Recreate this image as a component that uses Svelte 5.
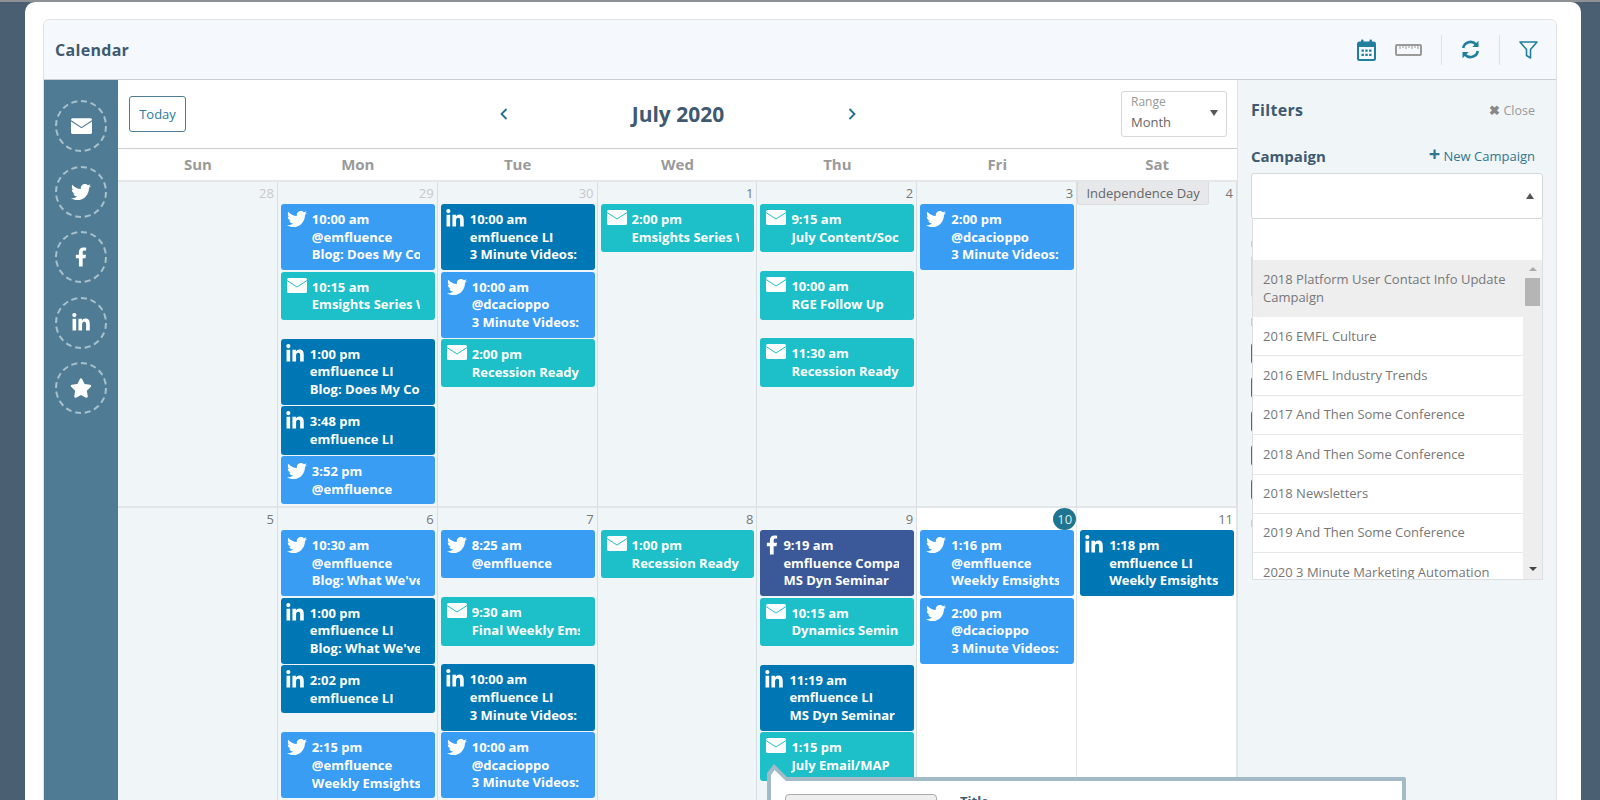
<script>
  const icons = {
    tw: { box: '0 0 512 512', w: 20, h: 20, d: 'M459.37 151.716c.325 4.548.325 9.097.325 13.645 0 138.72-105.583 298.558-298.558 298.558-59.452 0-114.68-17.219-161.137-47.106 8.447.974 16.568 1.299 25.34 1.299 49.055 0 94.213-16.568 130.274-44.832-46.132-.975-84.792-31.188-98.112-72.772 6.498.974 12.995 1.624 19.818 1.624 9.421 0 18.843-1.3 27.614-3.573-48.081-9.747-84.143-51.98-84.143-102.985v-1.299c13.969 7.797 30.214 12.67 47.431 13.319-28.264-18.843-46.781-51.005-46.781-87.391 0-19.492 5.197-37.36 14.294-52.954 51.655 63.675 129.3 105.258 216.365 109.807-1.624-7.797-2.599-15.918-2.599-24.04 0-57.828 46.782-104.934 104.934-104.934 30.213 0 57.502 12.67 76.67 33.137 23.715-4.548 46.456-13.32 66.599-25.34-7.798 24.366-24.366 44.833-46.132 57.827 21.117-2.273 41.584-8.122 60.426-16.243-14.292 20.791-32.161 39.308-52.628 54.253z' },
    li: { box: '0 0 448 512', w: 18, h: 20, d: 'M100.28 448H7.4V148.9h92.88zM53.79 108.1C24.09 108.1 0 83.5 0 53.8a53.79 53.79 0 0 1 107.58 0c0 29.7-24.1 54.3-53.79 54.3zM447.9 448h-92.68V302.4c0-34.7-.7-79.2-48.29-79.2-48.29 0-55.69 37.7-55.69 76.7V448h-92.78V148.9h89.08v40.8h1.3c12.4-23.5 42.69-48.3 87.88-48.3 94 0 111.28 61.9 111.28 142.3V448z' },
    fb: { box: '0 0 320 512', w: 12, h: 20, d: 'M279.14 288l14.22-92.66h-88.91v-60.13c0-25.35 12.42-50.06 52.24-50.06h40.42V6.26S260.43 0 225.36 0c-73.22 0-121.08 44.38-121.08 124.72v70.62H22.89V288h81.39v224h100.17V288z' },
    star: { box: '0 0 576 512', w: 22, h: 20, d: 'M259.3 17.8L194 150.2 47.9 171.5c-26.2 3.8-36.7 36.1-17.7 54.6l105.7 103-25 145.5c-4.5 26.3 23.2 46 46.4 33.7L288 439.6l130.7 68.7c23.2 12.2 50.9-7.4 46.4-33.7l-25-145.5 105.7-103c19-18.5 8.5-50.8-17.7-54.6L382 150.2 316.7 17.8c-11.7-23.6-45.6-23.9-57.4 0z' }
  };

  const days = ['Sun', 'Mon', 'Tue', 'Wed', 'Thu', 'Fri', 'Sat'];

  const ev = (type, time, who, what, gap) => ({ type, time, who, what, gap });

  const weeks = [
    [
      { n: 28, dim: true, events: [] },
      { n: 29, dim: true, events: [
        ev('tw', '10:00 am', '@emfluence', 'Blog: Does My Content Work'),
        ev('em', '10:15 am', 'Emsights Series Wrap', null, true),
        ev('li', '1:00 pm', 'emfluence LI', 'Blog: Does My Content Work'),
        ev('li', '3:48 pm', 'emfluence LI'),
        ev('tw', '3:52 pm', '@emfluence')
      ] },
      { n: 30, dim: true, events: [
        ev('li', '10:00 am', 'emfluence LI', '3 Minute Videos:'),
        ev('tw', '10:00 am', '@dcacioppo', '3 Minute Videos:'),
        ev('em', '2:00 pm', 'Recession Ready')
      ] },
      { n: 1, events: [ev('em', '2:00 pm', 'Emsights Series Wrap')] },
      { n: 2, events: [
        ev('em', '9:15 am', 'July Content/Social', null, true),
        ev('em', '10:00 am', 'RGE Follow Up', null, true),
        ev('em', '11:30 am', 'Recession Ready')
      ] },
      { n: 3, events: [ev('tw', '2:00 pm', '@dcacioppo', '3 Minute Videos:')] },
      { n: 4, holiday: 'Independence Day', events: [] }
    ],
    [
      { n: 5, events: [] },
      { n: 6, events: [
        ev('tw', '10:30 am', '@emfluence', "Blog: What We've Learned"),
        ev('li', '1:00 pm', 'emfluence LI', "Blog: What We've Learned"),
        ev('li', '2:02 pm', 'emfluence LI', null, true),
        ev('tw', '2:15 pm', '@emfluence', 'Weekly Emsights')
      ] },
      { n: 7, events: [
        ev('tw', '8:25 am', '@emfluence', null, true),
        ev('em', '9:30 am', 'Final Weekly Emsights', null, true),
        ev('li', '10:00 am', 'emfluence LI', '3 Minute Videos:'),
        ev('tw', '10:00 am', '@dcacioppo', '3 Minute Videos:')
      ] },
      { n: 8, events: [ev('em', '1:00 pm', 'Recession Ready')] },
      { n: 9, events: [
        ev('fb', '9:19 am', 'emfluence Company', 'MS Dyn Seminar'),
        ev('em', '10:15 am', 'Dynamics Seminar', null, true),
        ev('li', '11:19 am', 'emfluence LI', 'MS Dyn Seminar'),
        ev('em', '1:15 pm', 'July Email/MAP')
      ] },
      { n: 10, today: true, white: true, events: [
        ev('tw', '1:16 pm', '@emfluence', 'Weekly Emsights'),
        ev('tw', '2:00 pm', '@dcacioppo', '3 Minute Videos:')
      ] },
      { n: 11, white: true, events: [ev('li', '1:18 pm', 'emfluence LI', 'Weekly Emsights')] }
    ]
  ];

  const campaigns = [
    '2016 EMFL Culture',
    '2016 EMFL Industry Trends',
    '2017 And Then Some Conference',
    '2018 And Then Some Conference',
    '2018 Newsletters',
    '2019 And Then Some Conference',
    '2020 3 Minute Marketing Automation'
  ];
</script>

{#snippet glyph(type, cls)}
  {#if type === 'em'}
    <svg class={cls} width="20" height="15" viewBox="0 0 20 15">
      <rect width="20" height="15" rx="1.5" fill="#fff" />
      <path class="flap" d="M0 2.5 L10 9 L20 2.5" fill="none" stroke-width="1" />
    </svg>
  {:else}
    <svg class={cls} width={icons[type].w} height={icons[type].h} viewBox={icons[type].box}>
      <path d={icons[type].d} fill="#fff" />
    </svg>
  {/if}
{/snippet}

<div class="page">
  <div class="panel">
    <div class="card">
      <header class="head">
        <h1>Calendar</h1>
        <div class="tools">
          <svg width="19" height="22" viewBox="0 0 19 22">
            <rect x="1" y="3.5" width="17" height="17.5" rx="1.5" fill="none" stroke="#1f7f9c" stroke-width="2" />
            <rect x="1" y="3.5" width="17" height="4.5" fill="#1f7f9c" />
            <rect x="4" y="0.5" width="2.5" height="5" rx="1" fill="#1f7f9c" />
            <rect x="12.5" y="0.5" width="2.5" height="5" rx="1" fill="#1f7f9c" />
            <path d="M4.5 10.5h2.4v2.2H4.5zM8.3 10.5h2.4v2.2H8.3zM12.1 10.5h2.4v2.2h-2.4zM4.5 14.8h2.4V17H4.5zM8.3 14.8h2.4V17H8.3zM12.1 14.8h2.4V17h-2.4z" fill="#1f7f9c" />
          </svg>
          <svg class="ruler" width="27" height="12" viewBox="0 0 27 12">
            <rect x="1" y="1" width="25" height="10" rx="1" fill="none" stroke="#9a9a9a" stroke-width="2" />
            <path d="M5 2v3M8 2v2M11 2v3M14 2v2M17 2v3M20 2v2M23 2v3" stroke="#9a9a9a" stroke-width="1" />
          </svg>
          <span class="sep"></span>
          <svg width="19" height="19" viewBox="0 0 19 19">
            <path d="M2.2 8 A7.4 7.4 0 0 1 15 4.4" fill="none" stroke="#1f7f9c" stroke-width="2.6" />
            <path d="M17.5 0.8 V7 H11.3 Z" fill="#1f7f9c" />
            <path d="M16.8 11 A7.4 7.4 0 0 1 4 14.6" fill="none" stroke="#1f7f9c" stroke-width="2.6" />
            <path d="M1.5 18.2 V12 H7.7 Z" fill="#1f7f9c" />
          </svg>
          <span class="sep"></span>
          <svg width="19" height="18" viewBox="0 0 19 18">
            <path d="M1 1 H18 L11.5 8.5 V17 L7.5 14.5 V8.5 Z" fill="none" stroke="#1f7f9c" stroke-width="1.6" stroke-linejoin="round" />
          </svg>
        </div>
      </header>

      <div class="body">
        <aside class="rail">
          <span class="disc">
            <svg width="21" height="16" viewBox="0 0 20 15">
              <rect width="20" height="15" rx="1.5" fill="#fff" />
              <path d="M0 2.5 L10 9 L20 2.5" fill="none" stroke="#4f7c94" stroke-width="1" />
            </svg>
          </span>
          <span class="disc">{@render glyph('tw', 'rail-tw')}</span>
          <span class="disc">{@render glyph('fb', '')}</span>
          <span class="disc">{@render glyph('li', '')}</span>
          <span class="disc">{@render glyph('star', '')}</span>
        </aside>

        <main class="cal">
          <div class="bar">
            <button class="today">Today</button>
            <div class="month">
              <svg width="8" height="12" viewBox="0 0 8 12"><path d="M6.5 1 L1.5 6 L6.5 11" fill="none" stroke="#1f6f8f" stroke-width="1.8" /></svg>
              <h2>July 2020</h2>
              <svg width="8" height="12" viewBox="0 0 8 12"><path d="M1.5 1 L6.5 6 L1.5 11" fill="none" stroke="#1f6f8f" stroke-width="1.8" /></svg>
            </div>
            <div class="range">
              <div>
                <small>Range</small>
                <span>Month</span>
              </div>
              <i class="down"></i>
            </div>
          </div>

          <div class="dow">
            {#each days as d}
              <div>{d}</div>
            {/each}
          </div>

          <div class="grid">
            {#each weeks as week}
              {#each week as cell}
                <div class="cell" class:white={cell.white}>
                  <div class="date" class:dim={cell.dim}>
                    {#if cell.holiday}
                      <span class="holiday">{cell.holiday}</span>
                    {/if}
                    {#if cell.today}
                      <span class="today-n">{cell.n}</span>
                    {:else}
                      <span>{cell.n}</span>
                    {/if}
                  </div>
                  {#each cell.events as e}
                    <div class="event {e.type}" class:gap={e.gap}>
                      <span class="ico">{@render glyph(e.type, '')}</span>
                      <div class="txt">
                        <div>{e.time}</div>
                        <div>{e.who}</div>
                        {#if e.what}<div>{e.what}</div>{/if}
                      </div>
                    </div>
                  {/each}
                </div>
              {/each}
            {/each}
          </div>
        </main>

        <aside class="filters">
          <div class="f-top">
            <h3>Filters</h3>
            <span class="close"><b>✖</b> Close</span>
          </div>
          <div class="f-label">
            <h4>Campaign</h4>
            <span class="new"><b>+</b> New Campaign</span>
          </div>
          <div class="select"><i class="up"></i></div>

          <div class="under">
            <span class="tick t1"></span>
            <span class="ghost"></span>
            <span class="tick t2"></span>
            <span class="tog"></span>
            <span class="tog"></span>
            <span class="tog"></span>
            <span class="tog"></span>
            <span class="tog"></span>
            <span class="tick t3"></span>
          </div>

          <div class="drop">
            <div class="search"></div>
            <div class="drop-body">
              <ul>
                <li class="hl">2018 Platform User Contact Info Update Campaign</li>
                {#each campaigns as c}
                  <li>{c}</li>
                {/each}
              </ul>
              <div class="scroll">
                <i class="sb-up"></i>
                <span class="thumb"></span>
                <i class="sb-down"></i>
              </div>
            </div>
          </div>
        </aside>

        <div class="pop">
          <svg class="notch" width="24" height="20" viewBox="0 0 24 20">
            <path d="M0 20 V9 L7 0 L20 13 H24 V20 Z" fill="#a3bac7" />
            <path d="M4 20 V11 L7.5 6 L19 17 H24 V20 Z" fill="#fff" />
          </svg>
          <div class="pop-inner">
            <div class="pick"></div>
            <div class="pop-title">Title</div>
          </div>
        </div>
      </div>
    </div>
  </div>
</div>

<style>
  :global(body) {
    margin: 0;
    overflow: hidden;
  }

  .page {
    height: 800px;
    overflow: hidden;
    box-sizing: border-box;
    background: #4a6072;
    border-top: 2px solid #8d9094;
    padding: 0 19px 0 25px;
    font-family: "Open Sans", sans-serif;
    color: #555;
  }

  .panel {
    height: 900px;
    background: #fff;
    border-radius: 10px 10px 0 0;
    padding: 17px 24px 0 18px;
  }

  .card {
    border: 1px solid #dfe3e6;
    border-radius: 6px 6px 0 0;
    height: 880px;
  }

  .head {
    height: 59px;
    background: #f5f9fd;
    border-bottom: 1px solid #c9cfd3;
    border-radius: 6px 6px 0 0;
    display: flex;
    align-items: center;
    justify-content: space-between;
    padding: 0 18px 0 11px;
  }

  h1 {
    margin: 0;
    font-size: 16px;
    font-weight: 700;
    color: #3f5a70;
    letter-spacing: 0.3px;
  }

  .tools {
    display: flex;
    align-items: center;
    gap: 19px;
  }

  .sep {
    width: 1px;
    height: 30px;
    background: #dfe3e6;
  }

  .body {
    position: relative;
    display: flex;
    height: 820px;
  }

  .rail {
    width: 74px;
    flex: none;
    background: #4f7c94;
    display: flex;
    flex-direction: column;
    align-items: center;
    gap: 13.5px;
    padding-top: 20px;
    box-sizing: border-box;
  }

  .disc {
    width: 48px;
    height: 48px;
    border: 2px dashed #a9c1cd;
    border-radius: 50%;
    display: flex;
    align-items: center;
    justify-content: center;
    flex: none;
  }

  .cal {
    flex: 1;
    min-width: 0;
    background: #fff;
  }

  .bar {
    height: 68px;
    display: grid;
    grid-template-columns: 1fr auto 1fr;
    align-items: center;
    padding: 0 10px 0 11px;
    border-bottom: 1px solid #cfcfcf;
  }

  .today {
    justify-self: start;
    width: 57px;
    height: 36px;
    padding: 0;
    background: #fff;
    border: 1px solid #4f7c94;
    border-radius: 3px;
    font: 13px "Open Sans", sans-serif;
    color: #2b7a9e;
  }

  .month {
    width: 356px;
    display: flex;
    align-items: center;
    justify-content: space-between;
  }

  h2 {
    margin: 0;
    font-size: 21px;
    font-weight: 700;
    color: #3f5a70;
  }

  .range {
    justify-self: end;
    width: 106px;
    height: 46px;
    box-sizing: border-box;
    border: 1px solid #d5d8da;
    border-radius: 3px;
    padding: 0 9px 2px;
    display: flex;
    align-items: center;
    justify-content: space-between;
  }

  .range small {
    display: block;
    font-size: 12px;
    line-height: 17px;
    color: #999;
  }

  .range span {
    display: block;
    font-size: 13px;
    line-height: 24px;
    color: #666;
  }

  .down {
    width: 0;
    height: 0;
    margin-right: -1px;
    border: 4.5px solid transparent;
    border-top: 6px solid #555;
    border-bottom: 0;
  }

  .dow {
    height: 31px;
    display: grid;
    grid-template-columns: repeat(7, 1fr);
    border-bottom: 2px solid #e4e6e8;
    font-size: 15px;
    font-weight: 700;
    line-height: 30px;
    color: #9a9a9a;
    text-align: center;
  }

  .grid {
    display: grid;
    grid-template-columns: repeat(7, 1fr);
    grid-auto-rows: 326px;
  }

  .cell {
    min-width: 0;
    box-sizing: border-box;
    background: #f0f5f8;
    border-right: 1px solid #d9dee2;
    border-bottom: 2px solid #e3e6e8;
    padding: 0 2px 0 3px;
  }

  .cell.white {
    background: #fff;
    border-right-color: #e3e6e8;
  }

  .date {
    height: 22px;
    display: flex;
    align-items: center;
    justify-content: flex-end;
    gap: 0;
    padding-right: 1px;
    font-size: 13px;
    color: #777;
  }

  .date.dim {
    color: #c8c8c8;
  }

  .holiday {
    margin: 0 auto 0 -3px;
    width: 132px;
    height: 23px;
    line-height: 22px;
    box-sizing: border-box;
    background: #e6e8e9;
    border: 1px solid #dadcdd;
    border-top: 0;
    border-radius: 0 0 3px 3px;
    font-size: 13px;
    text-align: center;
    color: #666;
  }

  .today-n {
    width: 23px;
    height: 22px;
    margin: 0 -3px 0 0;
    background: #1f7590;
    border-radius: 50%;
    color: #d8eef5;
    text-align: center;
    line-height: 22px;
  }

  .event {
    display: flex;
    box-sizing: border-box;
    padding: 7px 15px 6px 6px;
    margin-bottom: 1.4px;
    border-radius: 3px;
    color: #fff;
    font-size: 13px;
    font-weight: 700;
    line-height: 17.7px;
    white-space: nowrap;
  }

  .event.gap {
    margin-bottom: 18.8px;
  }

  .event.tw {
    background: #3a9df4;
  }

  .event.em {
    background: #1dbfc9;
  }

  .event.li {
    background: #0077b5;
    padding-left: 5px;
  }

  .event.fb {
    background: #3b5998;
  }

  .ico {
    flex: none;
    margin-top: -2px;
  }

  .event.tw .ico {
    width: 25px;
  }

  .event.em .ico {
    width: 25px;
    margin-top: -1px;
  }

  .event.li .ico {
    width: 24px;
  }

  .event.fb .ico {
    width: 17px;
  }

  .flap {
    stroke: #1dbfc9;
  }

  .txt {
    min-width: 0;
    overflow: hidden;
  }

  .filters {
    width: 319px;
    flex: none;
    box-sizing: border-box;
    position: relative;
    background: #f0f5f8;
    border-left: 1px solid #dfe3e6;
    padding: 0 13px;
  }

  .f-top {
    height: 60px;
    display: flex;
    align-items: center;
    justify-content: space-between;
    padding-right: 8px;
  }

  h3 {
    margin: 0;
    font-size: 16px;
    font-weight: 700;
    color: #3f5a70;
    letter-spacing: 0.3px;
  }

  .close {
    font-size: 12.5px;
    color: #999;
  }

  .close b {
    font-size: 13px;
    color: #888;
  }

  .f-label {
    height: 33px;
    margin-top: -1px;
    margin-bottom: 1px;
    display: flex;
    align-items: center;
    justify-content: space-between;
    padding-right: 8px;
  }

  h4 {
    margin: 0;
    font-size: 15px;
    font-weight: 700;
    color: #3f5a70;
  }

  .new {
    font-size: 13px;
    color: #2f7690;
  }

  .new b {
    font-size: 20px;
    line-height: 12px;
    font-weight: 700;
  }

  .select {
    height: 46px;
    box-sizing: border-box;
    background: #fff;
    border: 1px solid #d5d8da;
    border-radius: 3px;
    display: flex;
    align-items: center;
    justify-content: flex-end;
    padding-right: 8px;
  }

  .up {
    width: 0;
    height: 0;
    border: 4.5px solid transparent;
    border-bottom: 6px solid #555;
    border-top: 0;
  }

  .under {
    display: flex;
    flex-direction: column;
    align-items: flex-start;
  }

  .tick {
    width: 3px;
    background: #e0c8b8;
  }

  .t1 {
    height: 6px;
    margin-top: 22px;
  }

  .ghost {
    width: 8px;
    height: 43px;
    margin-top: 8px;
    box-sizing: border-box;
    border: 1px solid #d5d8da;
    border-radius: 3px;
    background: #fff;
  }

  .t2 {
    height: 8px;
    margin-top: 20px;
  }

  .tog {
    width: 6px;
    height: 21px;
    margin-bottom: 13px;
    border-radius: 3px;
    background: #1f7f9c;
  }

  .t2 + .tog {
    margin-top: 17px;
  }

  .t3 {
    height: 7px;
    margin-top: 7px;
  }

  .drop {
    position: absolute;
    left: 14px;
    top: 139px;
    width: 291px;
    box-sizing: border-box;
    background: #fff;
    border: 1px solid #dcdfe1;
    border-top: 0;
  }

  .search {
    height: 41px;
  }

  .drop-body {
    display: flex;
    height: 319px;
    overflow: hidden;
  }

  .drop ul {
    flex: 1;
    min-width: 0;
    margin: 0;
    padding: 0;
    list-style: none;
    font-size: 13px;
    line-height: 17.5px;
    color: #777;
  }

  .drop li {
    box-sizing: border-box;
    height: 39.4px;
    padding: 10.5px 10px 0;
    border-bottom: 1px solid #e4e6e8;
    white-space: nowrap;
  }

  .drop li.hl {
    height: 57px;
    padding-top: 11px;
    padding-right: 6px;
    background: #eeeeee;
    border-bottom: 0;
    white-space: normal;
  }

  .scroll {
    width: 19px;
    flex: none;
    background: #eeeeee;
    display: flex;
    flex-direction: column;
    align-items: center;
    position: relative;
  }

  .sb-up {
    margin-top: 7px;
    border: 4px solid transparent;
    border-bottom: 4px solid #aaa;
    border-top: 0;
  }

  .thumb {
    width: 15px;
    height: 28px;
    margin-top: 7px;
    background: #b5b5b5;
  }

  .sb-down {
    position: absolute;
    bottom: 8px;
    border: 4px solid transparent;
    border-top: 4px solid #444;
    border-bottom: 0;
  }

  .pop {
    position: absolute;
    left: 723px;
    top: 697px;
    width: 639px;
    height: 200px;
    box-sizing: border-box;
    background: #fff;
    border: 4px solid #a3bac7;
    border-radius: 2px;
  }

  .notch {
    position: absolute;
    left: -4px;
    top: -17px;
  }

  .pop-inner {
    display: flex;
    gap: 23px;
    padding: 13px 14px;
  }

  .pick {
    width: 152px;
    height: 40px;
    box-sizing: border-box;
    background: #eee;
    border: 1px solid #aaa;
    border-radius: 4px;
  }

  .pop-title {
    font-size: 13px;
    font-weight: 700;
    line-height: 16px;
    color: #3f5a70;
    margin-top: -1px;
  }
</style>
